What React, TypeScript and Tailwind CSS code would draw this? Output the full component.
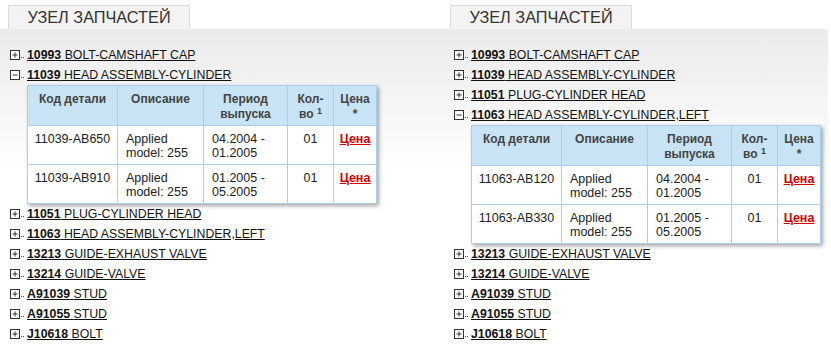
import React from 'react';

type Item = { code: string; name: string };
type Part = { code: string; desc: string; from: string; to: string; qty: string };

const items: Item[] = [
  { code: '10993', name: 'BOLT-CAMSHAFT CAP' },
  { code: '11039', name: 'HEAD ASSEMBLY-CYLINDER' },
  { code: '11051', name: 'PLUG-CYLINDER HEAD' },
  { code: '11063', name: 'HEAD ASSEMBLY-CYLINDER,LEFT' },
  { code: '13213', name: 'GUIDE-EXHAUST VALVE' },
  { code: '13214', name: 'GUIDE-VALVE' },
  { code: 'A91039', name: 'STUD' },
  { code: 'A91055', name: 'STUD' },
  { code: 'J10618', name: 'BOLT' },
];

const parts: Record<string, Part[]> = {
  '11039': [
    { code: '11039-AB650', desc: 'Applied model: 255', from: '04.2004 -', to: '01.2005', qty: '01' },
    { code: '11039-AB910', desc: 'Applied model: 255', from: '01.2005 -', to: '05.2005', qty: '01' },
  ],
  '11063': [
    { code: '11063-AB120', desc: 'Applied model: 255', from: '04.2004 -', to: '01.2005', qty: '01' },
    { code: '11063-AB330', desc: 'Applied model: 255', from: '01.2005 -', to: '05.2005', qty: '01' },
  ],
};

function TreeIcon({ open }: { open: boolean }) {
  return (
    <svg width="17" height="10" viewBox="0 0 17 10" className="shrink-0">
      <rect x="0.5" y="0.5" width="9" height="9" fill="white" stroke="#333" />
      <line x1="2.5" y1="5" x2="7.5" y2="5" stroke="#333" />
      {!open && <line x1="5" y1="2.5" x2="5" y2="7.5" stroke="#333" />}
      <rect x="11" y="7" width="1" height="1" fill="#555" />
      <rect x="13" y="7" width="1" height="1" fill="#555" />
    </svg>
  );
}

function PartsTable({ rows }: { rows: Part[] }) {
  const th = 'border border-[#a9d0ea] px-1 pt-[6px] align-top font-bold text-[12px] text-[#444] text-center leading-[15px]';
  const td = 'border border-[#a9d0ea] px-2 pt-[6px] align-top text-[12.5px] text-[#222] leading-[14px]';
  return (
    <table className="ml-[17px] table-fixed border-collapse bg-white shadow-[2px_2px_4px_rgba(0,0,0,0.35)]">
      <thead>
        <tr className="h-[40px] bg-[#c8e3f4]">
          <th className={`${th} w-[90px]`}>Код детали</th>
          <th className={`${th} w-[86px]`}>Описание</th>
          <th className={`${th} w-[84px]`}>
            Период
            <br />
            выпуска
          </th>
          <th className={`${th} w-[46px]`}>
            Кол-
            <br />
            во <sup className="text-[9px]">1</sup>
          </th>
          <th className={`${th} w-[43px]`}>
            Цена
            <br />*
          </th>
        </tr>
      </thead>
      <tbody>
        {rows.map((r) => (
          <tr key={r.code} className="h-[39px]">
            <td className={`${td} whitespace-nowrap text-center !px-0`}>{r.code}</td>
            <td className={td}>{r.desc}</td>
            <td className={td}>
              {r.from}
              <br />
              {r.to}
            </td>
            <td className={`${td} text-center`}>{r.qty}</td>
            <td className={`${td} text-center !px-0`}>
              <a href="#" className="font-bold text-[#d40000] underline">
                Цена
              </a>
            </td>
          </tr>
        ))}
      </tbody>
    </table>
  );
}

function Panel({ open, width, pad }: { open: string; width: string; pad: string }) {
  return (
    <div className={`${width} flex flex-col`}>
      <div className="flex h-[29px] items-end">
        <div className="ml-2 flex h-[24px] w-[182px] items-center justify-center border border-b-0 border-[#dcdcdc] bg-[#f3f3f3] text-[16.3px] text-[#333]">
          УЗЕЛ ЗАПЧАСТЕЙ
        </div>
      </div>
      <div className={`h-[319px] bg-gradient-to-b from-[#ebebeb] to-white to-[45%] pt-[16px] ${pad}`}>
        {items.map((it) => (
          <div key={it.code}>
            <div className="flex h-[20px] items-center">
              <TreeIcon open={it.code === open} />
              <a href="#" className="text-[12.3px] text-[#111] underline">
                <span className="font-bold">{it.code}</span> {it.name}
              </a>
            </div>
            {it.code === open && <PartsTable rows={parts[open]} />}
          </div>
        ))}
      </div>
    </div>
  );
}

export default function App() {
  return (
    <div className="flex w-[831px] h-[348px] bg-white font-['Liberation_Sans',Arial,sans-serif]">
      <Panel open="11039" width="w-[442px]" pad="pl-[10px]" />
      <Panel open="11063" width="w-[386px]" pad="pl-[12px]" />
    </div>
  );
}
